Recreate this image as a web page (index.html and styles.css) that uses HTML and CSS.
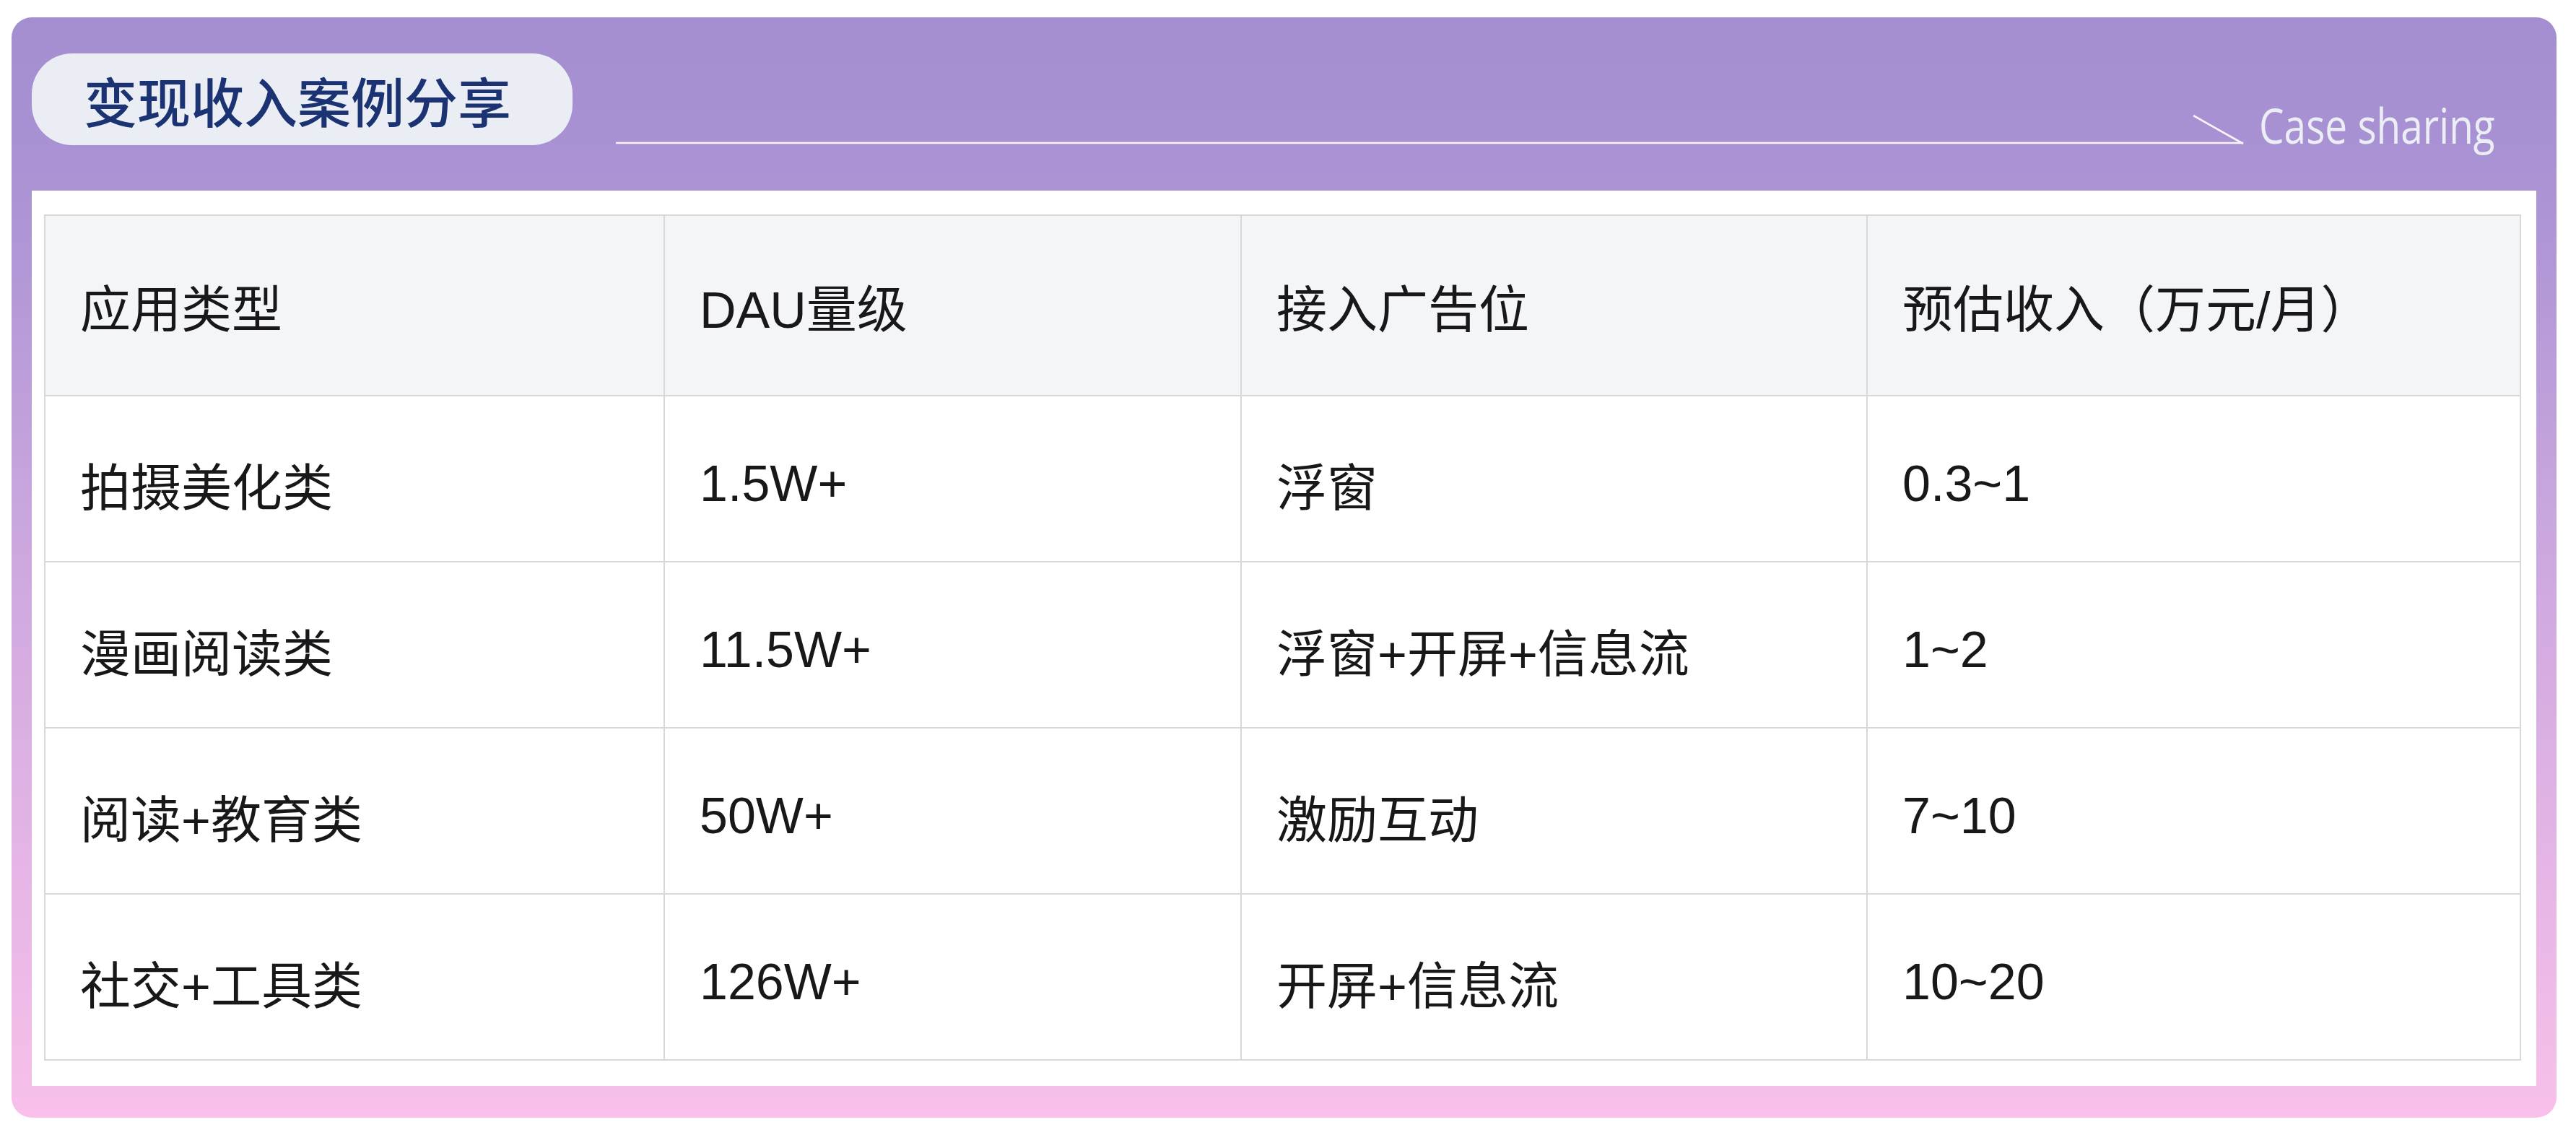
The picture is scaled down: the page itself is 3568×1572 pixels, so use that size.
FILE: index.html
```html
<!DOCTYPE html>
<html lang="zh-CN">
<head>
<meta charset="utf-8">
<title>变现收入案例分享</title>
<link rel="stylesheet" href="styles.css">
</head>
<body>
<section class="card">
  <header class="card-head">
    <div class="pill">变现收入案例分享</div>
    <svg class="deco" width="2256" height="44" viewBox="0 0 2256 44" aria-hidden="true">
      <line x1="0" y1="40" x2="2254" y2="40" stroke="#f6f5fb" stroke-width="2.6"/>
      <line x1="2185" y1="2" x2="2254" y2="41" stroke="#f6f5fb" stroke-width="2.6"/>
    </svg>
    <div class="caption"><span>Case sharing</span></div>
  </header>
  <div class="panel">
    <table class="cases">
      <colgroup>
        <col class="c1"><col class="c2"><col class="c3"><col class="c4">
      </colgroup>
      <thead>
        <tr><th>应用类型</th><th>DAU量级</th><th>接入广告位</th><th>预估收入（万元/月）</th></tr>
      </thead>
      <tbody>
        <tr><td>拍摄美化类</td><td>1.5W+</td><td>浮窗</td><td>0.3~1</td></tr>
        <tr><td>漫画阅读类</td><td>11.5W+</td><td>浮窗+开屏+信息流</td><td>1~2</td></tr>
        <tr><td>阅读+教育类</td><td>50W+</td><td>激励互动</td><td>7~10</td></tr>
        <tr><td>社交+工具类</td><td>126W+</td><td>开屏+信息流</td><td>10~20</td></tr>
      </tbody>
    </table>
  </div>
</section>
</body>
</html>
```

FILE: styles.css
```css
html, body {
  margin: 0;
  padding: 0;
  background: #ffffff;
}

body {
  padding: 24px 0 0 16px;
}

.card {
  width: 3525px;
  height: 1524px;
  box-sizing: border-box;
  border-radius: 28px;
  background: linear-gradient(180deg, #a38ecf 0%, #ab93d4 16%, #c9a6de 45%, #f8c0ea 100%);
  padding: 0 28px 44px 28px;
  display: flex;
  flex-direction: column;
}

.card-head {
  height: 240px;
  box-sizing: border-box;
  padding-top: 50px;
  display: flex;
  align-items: flex-start;
}

.pill {
  width: 749px;
  height: 127px;
  box-sizing: border-box;
  border-radius: 56px;
  background: #eaedf3;
  display: flex;
  align-items: center;
  padding-left: 72px;
  font-family: "Noto Sans CJK SC", sans-serif;
  font-weight: 500;
  font-size: 74px;
  color: #1b3372;
  white-space: nowrap;
  flex: none;
}

.deco {
  flex: none;
  margin-left: 60px;
  margin-top: 84px;
  display: block;
}

.caption {
  flex: none;
  margin-left: 20px;
  margin-top: 66px;
  font-family: "Open Sans", "Liberation Sans", sans-serif;
  font-weight: 500;
  font-size: 67px;
  line-height: 67px;
  color: #eceef5;
  white-space: nowrap;
}

.caption span {
  display: inline-block;
  transform: scaleX(0.82);
  transform-origin: left center;
}

.panel {
  flex: 1;
  background: #ffffff;
  padding: 33px 23px 31px 17px;
}

.cases {
  width: 3429px;
  border-collapse: collapse;
  table-layout: fixed;
  font-family: "Liberation Sans", "Noto Sans CJK SC", sans-serif;
  font-size: 70px;
  color: #18181a;
}

.c1 { width: 858px; }
.c2 { width: 799px; }
.c3 { width: 867px; }
.c4 { width: 905px; }

.cases th,
.cases td {
  border: 2px solid #d7d8da;
  padding: 0 0 0 48px;
  text-align: left;
  font-weight: 400;
  white-space: nowrap;
  vertical-align: middle;
}

.cases th {
  height: 248px;
  background: #f4f5f7;
}

.cases td {
  height: 230px;
  padding-top: 14px;
  box-sizing: border-box;
  background: #ffffff;
}
```
